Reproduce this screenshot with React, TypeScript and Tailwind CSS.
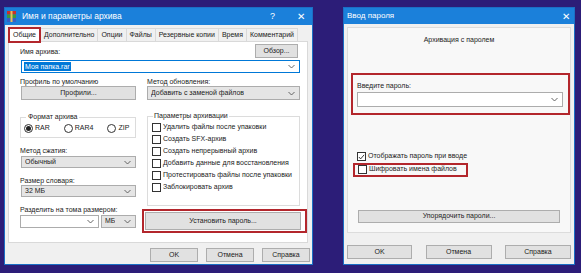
import React from 'react';

const Chevron = ({ className = '' }: { className?: string }) => (
  <svg width="7" height="5" viewBox="0 0 7 5" className={className}>
    <path d="M0.5 1 L3.5 4 L6.5 1" fill="none" stroke="#555" strokeWidth="0.9" />
  </svg>
);

const Btn = ({ children, className = '' }: { children: React.ReactNode; className?: string }) => (
  <div
    className={`flex items-center justify-center bg-[#e1e1e1] border border-[#adadad] text-[7px] text-[#222] ${className}`}
  >
    {children}
  </div>
);

const Select = ({ children, className = '', white = false }: { children?: React.ReactNode; className?: string; white?: boolean }) => (
  <div
    className={`flex items-center justify-between border border-[#acacac] pl-[3px] pr-[4px] text-[7px] ${white ? 'bg-white' : 'bg-[#e5e5e5]'} ${className}`}
  >
    <span className="truncate">{children}</span>
    <Chevron />
  </div>
);

const Check = ({ label, checked = false }: { label: string; checked?: boolean }) => (
  <div className="flex items-center h-[12px] gap-[2px]">
    <div className="w-[9px] h-[9px] border border-[#333] bg-white flex items-center justify-center">
      {checked && (
        <svg width="8" height="8" viewBox="0 0 8 8">
          <path d="M1 4 L3 6.2 L7 1.5" fill="none" stroke="#222" strokeWidth="1" />
        </svg>
      )}
    </div>
    <span className="text-[7px] text-[#222] whitespace-nowrap">{label}</span>
  </div>
);

const Radio = ({ label, on = false }: { label: string; on?: boolean }) => (
  <div className="flex items-center gap-[2px]">
    <div className="w-[9px] h-[9px] rounded-full border border-[#333] bg-white flex items-center justify-center">
      {on && <div className="w-[5px] h-[5px] rounded-full bg-[#222]" />}
    </div>
    <span className="text-[7px] text-[#222]">{label}</span>
  </div>
);

const RarIcon = () => (
  <svg width="9" height="11" viewBox="0 0 9 11">
    <rect x="0" y="0" width="9" height="3.5" fill="#c9302c" />
    <rect x="0" y="3.5" width="9" height="3.5" fill="#3d9a3d" />
    <rect x="0" y="7" width="9" height="4" fill="#3a5fc2" />
    <rect x="3.5" y="0" width="2" height="11" fill="#e8c25a" />
  </svg>
);

const tabs = ['Общие', 'Дополнительно', 'Опции', 'Файлы', 'Резервные копии', 'Время', 'Комментарий'];

const red = 'border-[#b3262c]';

export default function App() {
  return (
    <div className="w-[581px] h-[273px] bg-[#2c1d78] overflow-hidden flex items-start pt-[7px] pl-[4px] gap-[30px] font-['Liberation_Sans',Arial,sans-serif] text-[#222]">
      {/* left window */}
      <div className="w-[309px] h-[258px] border border-[#1b6fc4] bg-[#f0f0f0] flex flex-col">
        <div className="h-[17px] bg-[#1b80da] flex items-center pl-[2px] text-white">
          <RarIcon />
          <span className="ml-[6px] text-[8.5px]">Имя и параметры архива</span>
          <span className="ml-auto text-[9px] mr-[22px]">?</span>
          <span className="text-[10px] mr-[7px]">✕</span>
        </div>

        <div className="flex items-end ml-[3px] mt-[2px] h-[14px]">
          {tabs.map((t, i) =>
            i === 0 ? (
              <div key={t} className={`h-[16px] border-2 ${red} bg-white px-[3px] flex items-center text-[7px] relative z-10 -mb-[2px]`}>
                {t}
              </div>
            ) : (
              <div key={t} className="h-[13px] border border-l-0 border-b-0 border-[#d9d9d9] bg-[#f0f0f0] px-[3px] flex items-center text-[7px]">
                {t}
              </div>
            )
          )}
        </div>

        <div className="ml-[3px] mr-[4px] h-[202px] border border-[#d9d9d9] bg-white pl-[11px] pr-[7px] pt-[2px]">
          <div className="flex items-end justify-between h-[14px]">
            <span className="text-[7px] mb-[1px]">Имя архива:</span>
            <Btn className="w-[43px] h-[14px] mr-[2px]">Обзор...</Btn>
          </div>
          <div className="mt-[2px] ml-[1px] h-[13px] border border-[#0078d7] bg-white flex items-center justify-between pl-[2px] pr-[4px]">
            <span className="bg-[#0078d7] text-white text-[7px] px-[1px] leading-[9px]">Моя папка.rar</span>
            <Chevron />
          </div>

          <div className="flex mt-[4px]">
            <div className="w-[116px] flex flex-col">
              <span className="h-[9px] text-[7px] leading-[9px]">Профиль по умолчанию</span>
              <Btn className="h-[14px] ml-[1px]">Профили...</Btn>
              <fieldset className="mt-[13px] h-[25px] border border-[#dcdcdc] px-[3px]">
                <legend className="text-[7px] px-[2px] ml-[2px] leading-[8px]">Формат архива</legend>
                <div className="flex items-center gap-[14px] mt-[2px]">
                  <Radio label="RAR" on />
                  <Radio label="RAR4" />
                  <Radio label="ZIP" />
                </div>
              </fieldset>
              <span className="mt-[8px] h-[9px] text-[7px] leading-[9px]">Метод сжатия:</span>
              <Select className="h-[12px] mt-[1px] ml-[1px]">Обычный</Select>
              <span className="mt-[8px] h-[9px] text-[7px] leading-[9px]">Размер словаря:</span>
              <Select className="h-[12px] ml-[1px]">32 МБ</Select>
              <span className="mt-[8px] h-[9px] text-[7px] leading-[9px]">Разделить на тома размером:</span>
              <div className="flex mt-[1px] gap-[2px]">
                <Select white className="h-[13px] w-[79px]" />
                <Select className="h-[13px] flex-1">МБ</Select>
              </div>
            </div>

            <div className="w-[153px] ml-[11px] flex flex-col">
              <span className="h-[9px] text-[7px] leading-[9px]">Метод обновления:</span>
              <Select className="h-[14px]">Добавить с заменой файлов</Select>
              <fieldset className="mt-[12px] h-[94px] border border-[#dcdcdc] pl-[4px]">
                <legend className="text-[7px] px-[1px] ml-[1px] leading-[8px]">Параметры архивации</legend>
                <div className="flex flex-col mt-[1px]">
                  <Check label="Удалить файлы после упаковки" />
                  <Check label="Создать SFX-архив" />
                  <Check label="Создать непрерывный архив" />
                  <Check label="Добавить данные для восстановления" />
                  <Check label="Протестировать файлы после упаковки" />
                  <Check label="Заблокировать архив" />
                </div>
              </fieldset>
              <div className={`mt-[3px] -ml-[5px] -mr-[7px] border-2 ${red} pl-[1px] pr-[4px] py-[1px]`}>
                <Btn className="h-[18px]">Установить пароль...</Btn>
              </div>
            </div>
          </div>
        </div>

        <div className="flex justify-end gap-[8px] mr-[2px] mt-[5px]">
          <Btn className="w-[48px] h-[14px] border-[#0078d7]">OK</Btn>
          <Btn className="w-[48px] h-[14px]">Отмена</Btn>
          <Btn className="w-[48px] h-[14px]">Справка</Btn>
        </div>
      </div>

      {/* right window */}
      <div className="w-[232px] h-[258px] border border-[#1b6fc4] bg-[#f0f0f0] flex flex-col">
        <div className="h-[16px] bg-[#1b80da] flex items-center pl-[3px] text-white">
          <span className="text-[8px]">Ввод пароля</span>
          <span className="ml-auto text-[10px] mr-[4px]">✕</span>
        </div>
        <div className="mx-[3px] mt-[3px] h-[206px] border border-[#dcdcdc] bg-[#f8f8f8] flex flex-col">
          <div className="text-center text-[7px] mt-[7px]">Архивация с паролем</div>
          <div className={`mt-[27px] ml-[3px] h-[42px] border-2 ${red} pl-[4px] pr-[5px] pt-[6px]`}>
            <div className="text-[7px] leading-[9px]">Введите пароль:</div>
            <Select white className="h-[15px] mt-[2px]" />
          </div>
          <div className="ml-[9px] mt-[36px]">
            <Check label="Отображать пароль при вводе" checked />
          </div>
          <div className={`ml-[5px] w-[115px] h-[14px] border-2 ${red} pl-[3px] flex items-center`}>
            <Check label="Шифровать имена файлов" />
          </div>
          <Btn className="mx-[10px] mt-[33px] h-[13px]">Упорядочить пароли...</Btn>
        </div>
        <div className="flex justify-between mx-[3px] mt-[12px]">
          <Btn className="w-[65px] h-[14px] border-[#0078d7]">OK</Btn>
          <Btn className="w-[66px] h-[14px]">Отмена</Btn>
          <Btn className="w-[66px] h-[14px]">Справка</Btn>
        </div>
      </div>
    </div>
  );
}
